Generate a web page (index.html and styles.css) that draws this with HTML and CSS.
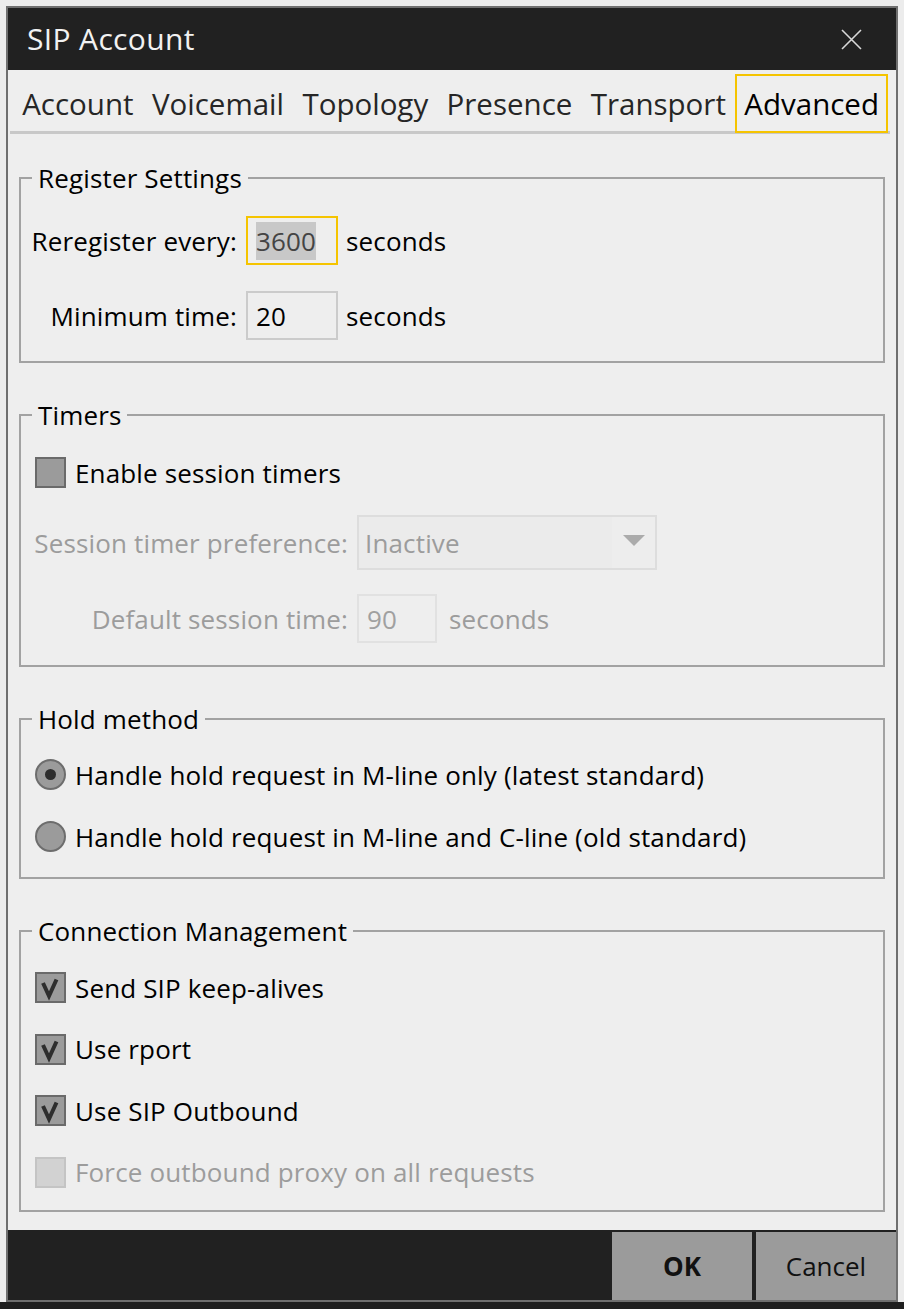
FILE: index.html
```html
<!DOCTYPE html>
<html lang="en">
<head>
<meta charset="utf-8">
<title>SIP Account</title>
<link rel="stylesheet" href="styles.css">
</head>
<body>
<div class="dialog">
  <div class="titlebar">
    <span class="title">SIP Account</span>
    <svg class="close" viewBox="0 0 21 21" aria-label="Close"><path d="M1 1 L20 20 M20 1 L1 20" stroke="#d8d8d8" stroke-width="1.6" fill="none"/></svg>
  </div>
  <div class="tabbar">
    <div class="tablist">
      <div class="tab">Account</div>
      <div class="tab">Voicemail</div>
      <div class="tab">Topology</div>
      <div class="tab">Presence</div>
      <div class="tab">Transport</div>
      <div class="tab active">Advanced</div>
    </div>
  </div>
  <div class="content">
    <fieldset class="group g-register">
      <legend>Register Settings</legend>
      <div class="row">
        <span class="label label-a">Reregister every:</span>
        <div class="field focus"><span class="sel">3600</span></div>
        <span class="unit">seconds</span>
      </div>
      <div class="row row-gap20">
        <span class="label label-a">Minimum time:</span>
        <div class="field">20</div>
        <span class="unit">seconds</span>
      </div>
    </fieldset>

    <fieldset class="group g-timers">
      <legend>Timers</legend>
      <div class="row check-row">
        <span class="box"></span>
        <span class="ctext">Enable session timers</span>
      </div>
      <div class="row row-gap15 disabled">
        <span class="label label-b">Session timer preference:</span>
        <div class="select">
          <span class="select-text">Inactive</span>
          <span class="select-arrow"><svg viewBox="0 0 22 11" width="22" height="11"><path d="M0 0 H22 L11 11 Z" fill="#ababab"/></svg></span>
        </div>
      </div>
      <div class="row row-gap21 disabled">
        <span class="label label-b">Default session time:</span>
        <div class="field field-small dis">90</div>
        <span class="unit unit-b">seconds</span>
      </div>
    </fieldset>

    <fieldset class="group g-hold">
      <legend>Hold method</legend>
      <div class="row check-row">
        <span class="radio on"></span>
        <span class="ctext">Handle hold request in M-line only (latest standard)</span>
      </div>
      <div class="row check-row row-gap7">
        <span class="radio"></span>
        <span class="ctext">Handle hold request in M-line and C-line (old standard)</span>
      </div>
    </fieldset>

    <fieldset class="group g-conn">
      <legend>Connection Management</legend>
      <div class="row check-row">
        <span class="box checked"><svg viewBox="0 0 27 27"><path d="M6 9 L12 22 L19.5 5.5" stroke="#2e2e2e" stroke-width="4" fill="none" stroke-linejoin="miter"/></svg></span>
        <span class="ctext">Send SIP keep-alives</span>
      </div>
      <div class="row check-row row-gap6">
        <span class="box checked"><svg viewBox="0 0 27 27"><path d="M6 9 L12 22 L19.5 5.5" stroke="#2e2e2e" stroke-width="4" fill="none" stroke-linejoin="miter"/></svg></span>
        <span class="ctext">Use rport</span>
      </div>
      <div class="row check-row row-gap6">
        <span class="box checked"><svg viewBox="0 0 27 27"><path d="M6 9 L12 22 L19.5 5.5" stroke="#2e2e2e" stroke-width="4" fill="none" stroke-linejoin="miter"/></svg></span>
        <span class="ctext">Use SIP Outbound</span>
      </div>
      <div class="row check-row row-gap6 disabled">
        <span class="box dis"></span>
        <span class="ctext">Force outbound proxy on all requests</span>
      </div>
    </fieldset>
  </div>
  <div class="footer">
    <div class="btn btn-ok">OK</div>
    <div class="btn">Cancel</div>
  </div>
</div>
</body>
</html>
```
FILE: styles.css
```css
* { box-sizing: border-box; }
html, body { margin: 0; padding: 0; }
body {
  width: 904px;
  height: 1309px;
  overflow: hidden;
  background: linear-gradient(#ececec 1302px, #1f1f1f 1302px);
  font-family: "Open Sans", "Noto Sans", sans-serif;
  color: #000;
}
.dialog {
  margin: 6px 0 0 6px;
  width: 892px;
  height: 1296px;
  border: 2px solid #6f6f6f;
  background: #eeeeee;
  display: flex;
  flex-direction: column;
}
.titlebar {
  flex: none;
  height: 62px;
  background: #212121;
  display: flex;
  align-items: center;
  justify-content: space-between;
  padding: 0 34px 0 19px;
}
.title {
  color: #f2f2f2;
  font-size: 30px;
  letter-spacing: 0.35px;
  line-height: 1;
}
.close { width: 21px; height: 21px; display: block; }

.tabbar {
  flex: none;
  height: 65px;
  padding: 4px 6px 0 2px;
}
.tablist {
  display: flex;
  height: 60px;
  border-bottom: 3px solid #c8c8c8;
  padding-left: 3px;
}
.tab {
  height: 59px;
  margin-bottom: -2px;
  border: 2px solid transparent;
  padding: 0 7.2px;
  font-size: 29.5px;
  letter-spacing: 0;
  line-height: 55px;
  color: #262626;
  white-space: nowrap;
}
.tab.active {
  border-color: #f5c400;
  color: #000;
  background: #eeeeee;
}

.content {
  flex: 1;
  padding: 28px 11px 0;
  display: flex;
  flex-direction: column;
  gap: 37px;
  letter-spacing: 0.15px;
}
.group {
  margin: 0;
  min-width: 0;
  border: 2px solid #a2a2a2;
  padding: 0;
}
.group legend {
  margin-left: 11px;
  padding: 0 6px;
  font-size: 26px;
  line-height: 30px;
}
.g-register { padding: 20px 0 18px; }
.g-timers { padding: 15px 0 19px; }
.g-hold { padding: 13px 0 13px; }
.g-conn { padding: 14px 0 10.5px; }

.row {
  height: 55px;
  display: flex;
  align-items: center;
  font-size: 26px;
  white-space: nowrap;
}
.row-gap20 { margin-top: 20px; }
.row-gap15 { margin-top: 15px; }
.row-gap21 { margin-top: 21px; }
.row-gap7 { margin-top: 7px; }
.row-gap6 { margin-top: 6.5px; }

.label { text-align: right; flex: none; }
.label-a { width: 216px; margin-right: 9px; }
.label-b { width: 327px; margin-right: 9px; }
.unit { margin-left: 8px; }
.unit-b { margin-left: 12px; }
.disabled { color: #9c9c9c; }

.field {
  flex: none;
  width: 92px;
  height: 49px;
  border: 2px solid #cbcbcb;
  background: #eeeeee;
  padding-left: 8px;
  display: flex;
  align-items: center;
}
.field.focus { border-color: #f5c400; }
.field-small { width: 80px; }
.field.dis { border-color: #e1e1e1; color: #a0a0a0; }
.sel {
  background: #c8c8c8;
  color: #444;
  height: 38px;
  line-height: 38px;
}

.select {
  flex: none;
  width: 300px;
  height: 55px;
  border: 2px solid #dddddd;
  background: #ebebeb;
  display: flex;
  align-items: center;
}
.select-text { flex: 1; padding-left: 6px; color: #9c9c9c; }
.select-arrow {
  width: 43px;
  height: 100%;
  display: flex;
  align-items: center;
  justify-content: center;
  background: #ededed;
}
.select-arrow svg { display: block; margin-top: -4px; }

.check-row { padding-left: 14px; }
.ctext { margin-left: 9px; }
.box {
  flex: none;
  width: 31px;
  height: 31px;
  border: 2px solid #6a6a6a;
  background: #9b9b9b;
  display: flex;
}
.box svg { width: 27px; height: 27px; display: block; }
.box.dis { border-color: #c4c4c4; background: #d2d2d2; }
.radio {
  flex: none;
  width: 31px;
  height: 31px;
  border-radius: 50%;
  border: 2px solid #6d6d6d;
  background: #9b9b9b;
  display: flex;
  align-items: center;
  justify-content: center;
}
.radio.on::after {
  content: "";
  width: 11px;
  height: 11px;
  border-radius: 50%;
  background: #2d2d2d;
}

.footer {
  flex: none;
  height: 70px;
  background: #212121;
  padding-top: 2px;
  display: flex;
  justify-content: flex-end;
  gap: 4px;
}
.btn {
  width: 140px;
  background: #9b9b9b;
  display: flex;
  align-items: center;
  justify-content: center;
  font-size: 26px;
  color: #111;
}
.btn-ok { font-weight: 700; }
```
